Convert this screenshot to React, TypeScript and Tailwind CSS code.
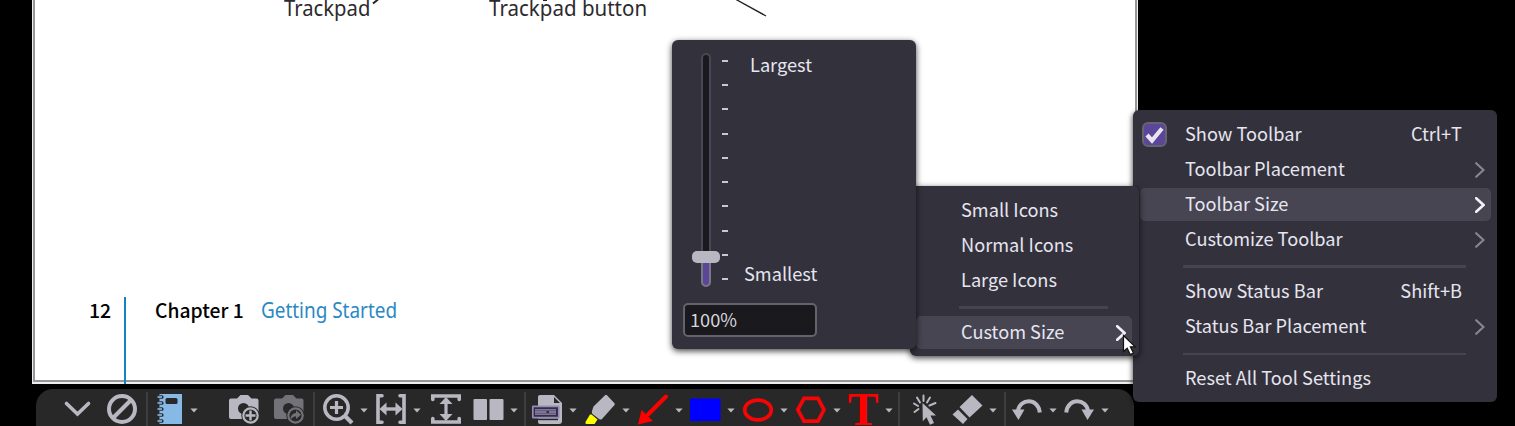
import type { ReactNode } from "react";

const FG = "#b9b8c2";

function Caret() {
  return (
    <svg className="ml-[7px] mt-[3px] h-[5px] w-[8px] shrink-0" viewBox="0 0 8 5">
      <path d="M0.4 0.4h7.2L4 4.4z" fill={FG} />
    </svg>
  );
}

function Tool({ width, caret, children }: { width: string; caret?: boolean; children: ReactNode }) {
  return (
    <div className={`flex shrink-0 items-center ${width}`}>
      <svg className="size-[30px] shrink-0 overflow-visible" viewBox="0 0 30 30" fill="none">
        {children}
      </svg>
      {caret && <Caret />}
    </div>
  );
}

function Divider({ className }: { className: string }) {
  return <div className={`mt-[3px] h-full w-[2px] shrink-0 self-start bg-[#3d3d3e] ${className}`} />;
}

function Camera({ color, plus }: { color: string; plus?: boolean }) {
  return (
    <>
      <path
        fillRule="evenodd"
        fill={color}
        d="M2 4.5h6L11.5 1h7.5l3.500 3.500h5q2 0 2 2V23q0 2-2 2H2q-2 0-2-2V6.500q0-2 2-2zM14.500 9a5.500 5.500 0 1 0 0 11a5.500 5.500 0 1 0 0-11z"
      />
      <circle cx="21.500" cy="21.500" r="9.200" fill="#282828" />
      <circle cx="21.500" cy="21.500" r="7.200" stroke={color} strokeWidth="2.200" />
      {plus ? (
        <path d="M21.500 16.500v10M16.500 21.500h10" stroke={color} strokeWidth="2.400" />
      ) : (
        <path d="M16.500 25.500q0.500-6.500 5.500-6.500v-2.700l5 4.500-5 4.200v-2.800q-3 0-5.500 3.300z" fill={color} />
      )}
    </>
  );
}

function Toolbar() {
  return (
    <div className="absolute left-[36px] top-[389px] flex h-[40px] w-[1098px] items-center rounded-t-[17px] bg-[#282828] pl-[26px]">
      <Tool width="w-[45px]">
        <path d="M4.500 9.500l11 10.500 11-10.500" stroke={FG} strokeWidth="3.600" strokeLinecap="round" />
      </Tool>
      <Tool width="w-[39px]">
        <circle cx="15" cy="15" r="13" stroke={FG} strokeWidth="4" />
        <path d="M6 24L24 6" stroke={FG} strokeWidth="4" />
      </Tool>
      <Divider className="mr-[5px]" />
      <Tool width="w-[76px]" caret>
        <path d="M6.500 0H29v30H6.500z" fill="#87b9e6" />
        <rect x="12.500" y="4" width="12" height="6" rx="1.500" fill="#282828" />
        {[3, 9, 15, 21, 27].map((y) => (
          <g key={y}>
            <rect x="6" y={y - 1.8} width="4.500" height="3.600" rx="1.500" fill="#282828" />
            <path d={`M4.500 ${y}h4.500`} stroke="#87b9e6" strokeWidth="1.600" />
          </g>
        ))}
      </Tool>
      <Tool width="w-[45px]">
        <Camera color={FG} plus />
      </Tool>
      <Tool width="w-[39px]">
        <Camera color="#737278" />
      </Tool>
      <Divider className="mr-[8px]" />
      <Tool width="w-[53px]" caret>
        <circle cx="13.500" cy="13.500" r="11.700" stroke={FG} strokeWidth="3.500" />
        <path d="M13.500 7v13M7 13.500h13" stroke={FG} strokeWidth="3.200" />
        <path d="M21.500 21.500l7.500 7.500" stroke={FG} strokeWidth="4.200" />
      </Tool>
      <Tool width="w-[55px]" caret>
        <path d="M6 1.800H2v26.400h4M24 1.800h4v26.400h-4" stroke={FG} strokeWidth="3.600" strokeLinecap="round" />
        <path d="M8 15h14" stroke={FG} strokeWidth="3.400" />
        <path d="M3.500 15l7-6.500v13zM26.500 15l-7-6.500v13z" fill={FG} />
      </Tool>
      <Tool width="w-[42px]">
        <path d="M1.800 5.500V2h26.400v3.500M1.800 24.500V28h26.400v-3.500" stroke={FG} strokeWidth="3.600" strokeLinecap="round" />
        <path d="M15 8v14" stroke={FG} strokeWidth="3.200" />
        <path d="M15 3l6.500 7h-13zM15 27l6.500-7h-13z" fill={FG} />
      </Tool>
      <Tool width="w-[51px]" caret>
        <rect x="0.500" y="5" width="13.500" height="21" rx="1" fill={FG} />
        <rect x="16.500" y="5" width="14" height="21" rx="1" fill={FG} />
      </Tool>
      <Divider className="mr-[6px]" />
      <Tool width="w-[53px]" caret>
        <path d="M8 1h14l8 8v18q0 3-3 3H8q-2 0-2-2V3q0-2 2-2z" fill={FG} />
        <path d="M22 3v6h6z" fill="#282828" />
        <path d="M5 24.500h21v1.700H5z" fill="#282828" />
        <rect x="0.800" y="12.300" width="26" height="11.400" rx="0.500" fill="#33303d" stroke="#988bbd" strokeWidth="1.700" />
        <path d="M3 15.900h21M3 20.100h21M3 18h11.500M17 18h7" stroke="#988bbd" strokeWidth="1.400" />
      </Tool>
      <Tool width="w-[53px]" caret>
        <path d="M20 1.300q1-1 2 0l7.500 8q.8 1-.2 2L17 25q-1 1-3 0l-6.500-5q-1-1-.5-3l1.500-4.500z" fill={FG} />
        <path d="M5 20.500h1.500l6 5-3 4.500H1.500q-1.500 0-1-2z" fill="#ffff00" />
      </Tool>
      <Tool width="w-[52px]" caret>
        <path d="M28 2.500L10 20.500" stroke="#ff0000" strokeWidth="4" strokeLinecap="round" />
        <path d="M0 30.500l3.500-14.500 11.500 11z" fill="#ff0000" />
      </Tool>
      <Tool width="w-[53px]" caret>
        <rect x="0" y="4.500" width="30.500" height="22.500" fill="#0000ff" />
      </Tool>
      <Tool width="w-[53px]" caret>
        <ellipse cx="15" cy="16" rx="13.300" ry="9.800" stroke="#f50505" strokeWidth="3.700" />
      </Tool>
      <Tool width="w-[52px]" caret>
        <path d="M8 4.300h14l6 11.500-6 11.400H8L1.800 15.800z" stroke="#f50505" strokeWidth="3.700" />
      </Tool>
      <div className="flex w-[50px] shrink-0 items-center">
        <span className="flex h-[40px] w-[30px] shrink-0 items-center justify-center pt-[2px] font-['Liberation_Serif'] text-[46px] font-bold leading-[38px] text-[#ff0000]">
          T
        </span>
        <Caret />
      </div>
      <Divider className="mr-[10px]" />
      <Tool width="w-[42px]">
        <path
          d="M13.500 7V1.500M10 8.500L7 3.500M8 12L4 9.500M17 8.500L20 3.500M19.500 11.500l6-2.500M8.500 15l-4 3"
          stroke={FG}
          strokeWidth="2"
          strokeLinecap="round"
        />
        <path d="M12.500 9l13.500 12.500h-5.500L24 29l-4 1.800-3.500-7.500-3.700 4z" fill={FG} />
      </Tool>
      <Tool width="w-[52px]" caret>
        <path d="M20 1l10.500 10.500L17.500 23.500 7.500 13zM6 15.500L15.500 25 11 30 0.500 20.500z" fill={FG} />
      </Tool>
      <Divider className="mr-[6px]" />
      <Tool width="w-[52px]" caret>
        <path d="M6 17c1.500-12.500 20-14 21.800 1.500" stroke={FG} strokeWidth="4" />
        <path d="M0 15.500h12.500L6.500 26z" fill={FG} />
      </Tool>
      <Tool width="w-[52px]" caret>
        <path d="M24 17c-1.500-12.500-20-14-21.800 1.500" stroke={FG} strokeWidth="4" />
        <path d="M30 15.500H17.500L23.500 26z" fill={FG} />
      </Tool>
    </div>
  );
}

function DocumentPage() {
  return (
    <div className="absolute left-[32px] top-0 h-[384px] w-[1106px] border-x border-b-2 border-[#eeeeee] bg-white">
      <div className="relative h-full border-x-2 border-b-2 border-[#96969a]">
        <div className="flex h-[20px] items-start pl-[249px] font-['Noto_Sans',sans-serif] text-[22px] leading-[14px] text-[#2c2a2e]">
          <span className="w-[205px] shrink-0 whitespace-nowrap">
            <span className="inline-block origin-left scale-x-[0.92]">Trackpad</span>
          </span>
          <span className="inline-block origin-left scale-x-[0.933] whitespace-nowrap">Trackpad button</span>
        </div>
        <svg className="absolute left-[335px] top-0 h-[20px] w-[420px]" viewBox="370 0 420 20">
          <path d="M373 3.500l5-4M543 0h4" stroke="#222" strokeWidth="2" />
          <path d="M736 -0.500L766 16" stroke="#222" strokeWidth="1.400" />
        </svg>
        <div className="mt-[277px] flex h-[87px] items-start font-['Noto_Sans_CJK_SC',sans-serif]">
          <span className="w-[89px] pl-[54px] text-[19.500px] font-medium leading-[26px] text-black">12</span>
          <span className="h-[87px] w-[2px] bg-[#1583c3]" />
          <span className="w-[106px] whitespace-nowrap pl-[29px] text-[19.300px] font-medium leading-[26px] text-black">
            Chapter 1
          </span>
          <span className="ml-[29px] inline-block origin-left scale-x-[0.86] whitespace-nowrap font-['Noto_Sans',sans-serif] text-[22px] leading-[24px] text-[#2b88c4]">
            Getting Started
          </span>
        </div>
      </div>
    </div>
  );
}

function MenuRow({
  label,
  pad,
  shortcut,
  sub,
  active,
  checked,
}: {
  label: string;
  pad: string;
  shortcut?: string;
  sub?: boolean;
  active?: boolean;
  checked?: boolean;
}) {
  return (
    <div className="flex h-[35px] items-center py-px">
      <div className={`flex h-[33px] flex-1 items-center rounded-[5px] ${pad} ${active ? "bg-[#464551]" : ""}`}>
        {checked && (
          <span className="ml-[2px] mr-[18px] flex size-[25px] items-center justify-center rounded-[6px] border-2 border-[#66646f] bg-[#5b469a]">
            <svg className="size-[21px]" viewBox="0 0 21 21" fill="none">
              <path d="M3 11l5 5.500L18 4.500" stroke="#e6e5f0" strokeWidth="4.200" />
            </svg>
          </span>
        )}
        <span className="whitespace-nowrap pb-[3px]">{label}</span>
        {shortcut && <span className="ml-auto mr-[29px] whitespace-nowrap pb-[3px]">{shortcut}</span>}
        {sub && (
          <svg className="ml-auto mr-[6px] h-[16px] w-[10px]" viewBox="0 0 10 16" fill="none">
            <path
              d="M1.200 1.200L8.500 8l-7.300 6.800"
              stroke={active ? "#f2f1f8" : "#89888f"}
              strokeWidth={active ? 2.6 : 2.1}
              strokeLinecap="round"
            />
          </svg>
        )}
      </div>
    </div>
  );
}

function ToolbarMenu() {
  return (
    <div className="absolute left-[1133px] top-[110px] h-[292px] w-[364px] rounded-[6px] bg-[#33323c] pl-[7px] pr-[6px] pt-[7px] shadow-[-1px_2px_5px_rgba(0,0,0,0.6)]">
      <MenuRow label="Show Toolbar" pad="" shortcut="Ctrl+T" checked />
      <MenuRow label="Toolbar Placement" pad="pl-[45px]" sub />
      <MenuRow label="Toolbar Size" pad="pl-[45px]" sub active />
      <MenuRow label="Customize Toolbar" pad="pl-[45px]" sub />
      <div className="flex h-[17px] items-center">
        <div className="ml-[43px] mt-[2px] h-[3px] w-[283px] bg-[#45444f]" />
      </div>
      <MenuRow label="Show Status Bar" pad="pl-[45px]" shortcut="Shift+B" />
      <MenuRow label="Status Bar Placement" pad="pl-[45px]" sub />
      <div className="flex h-[17px] items-center">
        <div className="ml-[43px] mt-[2px] h-[2px] w-[283px] bg-[#45444f]" />
      </div>
      <MenuRow label="Reset All Tool Settings" pad="pl-[45px]" />
    </div>
  );
}

function SizeMenu() {
  return (
    <div className="absolute left-[910px] top-[186px] h-[170px] w-[229px] rounded-[6px] bg-[#33323c] pl-[6px] pr-[7px] pt-[7px] shadow-[0_2px_6px_rgba(0,0,0,0.75)]">
      <MenuRow label="Small Icons" pad="pl-[45px]" />
      <MenuRow label="Normal Icons" pad="pl-[45px]" />
      <MenuRow label="Large Icons" pad="pl-[45px]" />
      <div className="flex h-[17px] items-center">
        <div className="ml-[43px] mt-[2px] h-[3px] w-[149px] bg-[#45444f]" />
      </div>
      <MenuRow label="Custom Size" pad="pl-[45px]" sub active />
    </div>
  );
}

function SizePanel() {
  return (
    <div className="absolute left-[672px] top-[40px] flex h-[309px] w-[244px] flex-col rounded-[6px] bg-[#33323c] pl-[11px] pt-[13px] shadow-[0_2px_6px_rgba(0,0,0,0.75)]">
      <div className="flex h-[234px]">
        <div className="relative ml-[18px] h-[234px] w-[10px] rounded-full border-2 border-[#484753] bg-[#1a191e]">
          <div className="absolute -bottom-[2px] -left-[2px] h-[34px] w-[10px] rounded-b-full border-2 border-[#7a7884] bg-[#5b469a]" />
          <div className="absolute -left-[11px] top-[196px] h-[12px] w-[28px] rounded-[5px] bg-[#b9b8c2]" />
        </div>
        <div className="ml-[11px] mt-[7px] flex h-[220px] flex-col justify-between">
          {Array.from({ length: 10 }, (_, i) => (
            <div key={i} className="h-[2px] w-[6px] bg-[#c9c8d2]" />
          ))}
        </div>
        <div className="flex flex-col justify-between pl-[16px]">
          <span className="pl-[6px] leading-[23px]">Largest</span>
          <span className="leading-[27px]">Smallest</span>
        </div>
      </div>
      <div className="mt-[16px] flex h-[34px] w-[134px] items-center rounded-[5px] border-2 border-[#64626f] bg-[#1a191e] pb-[3px] pl-[5px] text-[#d6d5da]">
        100%
      </div>
    </div>
  );
}

export default function App() {
  return (
    <div className="relative h-[426px] w-[1515px] overflow-hidden bg-black font-['Noto_Sans_CJK_SC',sans-serif] text-[18.200px] leading-[24px] text-[#e6e5f0]">
      <DocumentPage />
      <Toolbar />
      <ToolbarMenu />
      <SizeMenu />
      <SizePanel />
      <svg className="absolute left-[1122px] top-[334px] h-[22px] w-[15px]" viewBox="0 0 15 22">
        <path d="M1.500 1.500v16l3.700-3.300 3 6.300 3.200-1.500-3-6.200h4.800z" fill="#fff" stroke="#111" strokeWidth="1.200" />
      </svg>
    </div>
  );
}
